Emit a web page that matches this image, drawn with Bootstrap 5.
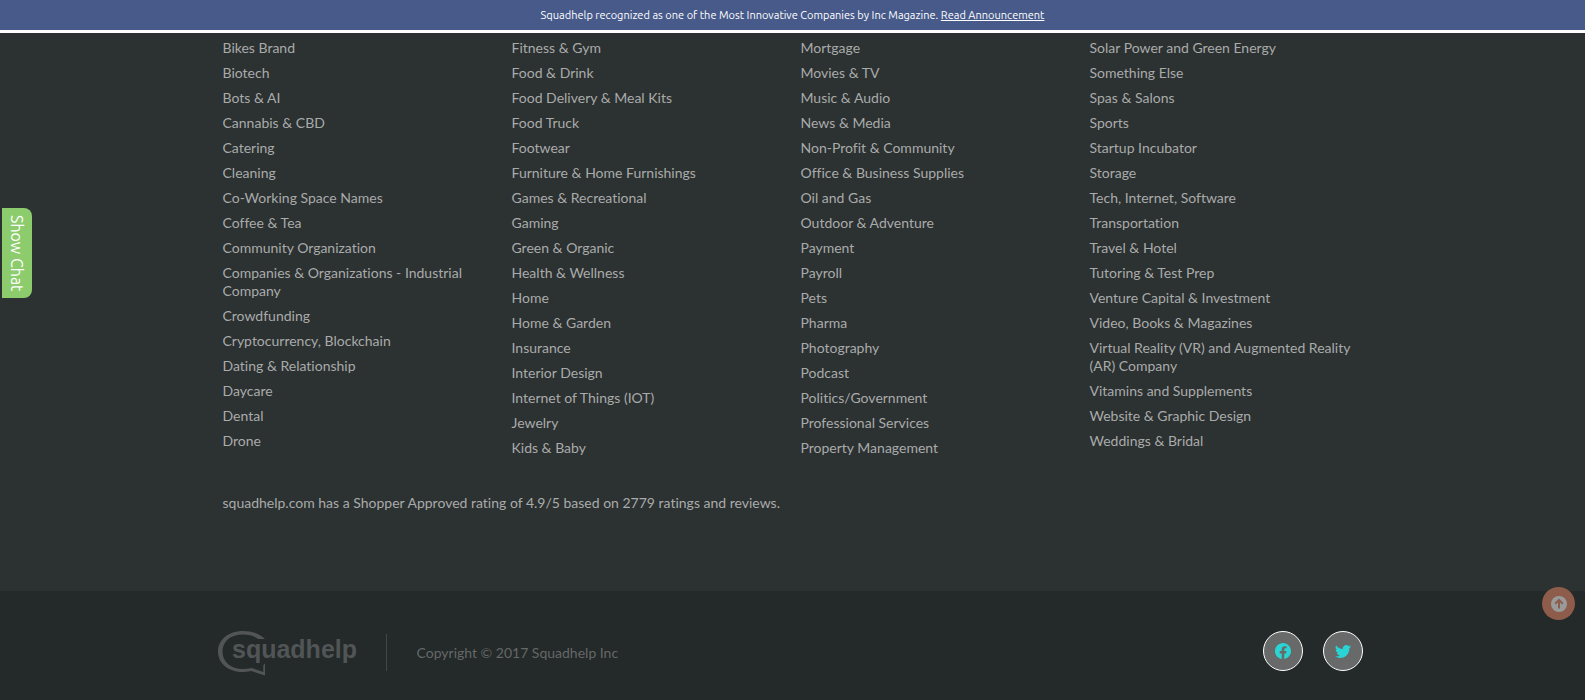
<!DOCTYPE html>
<html lang="en">
<head>
<meta charset="utf-8">
<meta name="viewport" content="width=device-width, initial-scale=1">
<title>Squadhelp</title>
<link href="https://cdn.jsdelivr.net/npm/bootstrap@5.3.0/dist/css/bootstrap.min.css" rel="stylesheet">
<style>
  body { background: #2c3131; color: #a9abab; font: 14px/18px Lato, sans-serif; font-variant-ligatures: none; }
  .announce { background: #475a8a; border-bottom: 3px solid #fff; color: #fff; font: 11px/16px Ubuntu, "Noto Sans", sans-serif; padding: 7px 0; min-height: 33px; }
  .wrap { max-width: 1170px; padding: 0 15px; }
  .industries { display: grid; grid-template-columns: repeat(4, 1fr); column-gap: 16px; padding-top: 6px; }
  .industries li { margin-bottom: 7px; }
  .industries a { color: inherit; text-decoration: none; }
  .rating { padding: 30px 0 79px; }
  .site-footer { background: #242929; color: #646868; padding: 40px 0 24px; }
  .legal { border-left: 1px solid #434747; margin: 3px 0 0 29px; padding: 9px 0 9px 30px; line-height: 19px; }
  .brand-logo { display: block; margin-left: -5px; }
  .social { width: 40px; height: 40px; background: #686969; border: 1px solid #fff; color: #2bd4d4; }
  .to-top { right: 10px; bottom: 80px; width: 33px; height: 33px; background: #8e5c4a; color: #999b9a; }
  .chat-tab { left: 2px; top: 208px; width: 30px; height: 90px; background: #8ccc6d; color: #fff; border-radius: 0 8px 8px 0; writing-mode: vertical-rl; font: 16px/30px Ubuntu, "Noto Sans", sans-serif; }
  @media (max-width: 900px) { .industries { grid-template-columns: repeat(2, 1fr); } }
</style>
</head>
<body class="d-flex flex-column min-vh-100">
<header class="announce text-center sticky-top">Squadhelp recognized as one of the Most Innovative Companies by Inc Magazine. <a href="#" class="text-white">Read Announcement</a></header>
<main class="flex-grow-1">
  <div class="wrap mx-auto">
    <nav class="industries" aria-label="Industries">
      <ul class="list-unstyled mb-0">
        <li><a href="#">Bikes Brand</a></li><li><a href="#">Biotech</a></li><li><a href="#">Bots &amp; AI</a></li>
        <li><a href="#">Cannabis &amp; CBD</a></li><li><a href="#">Catering</a></li><li><a href="#">Cleaning</a></li>
        <li><a href="#">Co-Working Space Names</a></li><li><a href="#">Coffee &amp; Tea</a></li><li><a href="#">Community Organization</a></li>
        <li><a href="#">Companies &amp; Organizations - Industrial Company</a></li><li><a href="#">Crowdfunding</a></li>
        <li><a href="#">Cryptocurrency, Blockchain</a></li><li><a href="#">Dating &amp; Relationship</a></li><li><a href="#">Daycare</a></li>
        <li><a href="#">Dental</a></li><li><a href="#">Drone</a></li>
      </ul>
      <ul class="list-unstyled mb-0">
        <li><a href="#">Fitness &amp; Gym</a></li><li><a href="#">Food &amp; Drink</a></li><li><a href="#">Food Delivery &amp; Meal Kits</a></li>
        <li><a href="#">Food Truck</a></li><li><a href="#">Footwear</a></li><li><a href="#">Furniture &amp; Home Furnishings</a></li>
        <li><a href="#">Games &amp; Recreational</a></li><li><a href="#">Gaming</a></li><li><a href="#">Green &amp; Organic</a></li>
        <li><a href="#">Health &amp; Wellness</a></li><li><a href="#">Home</a></li><li><a href="#">Home &amp; Garden</a></li>
        <li><a href="#">Insurance</a></li><li><a href="#">Interior Design</a></li><li><a href="#">Internet of Things (IOT)</a></li>
        <li><a href="#">Jewelry</a></li><li><a href="#">Kids &amp; Baby</a></li>
      </ul>
      <ul class="list-unstyled mb-0">
        <li><a href="#">Mortgage</a></li><li><a href="#">Movies &amp; TV</a></li><li><a href="#">Music &amp; Audio</a></li>
        <li><a href="#">News &amp; Media</a></li><li><a href="#">Non-Profit &amp; Community</a></li><li><a href="#">Office &amp; Business Supplies</a></li>
        <li><a href="#">Oil and Gas</a></li><li><a href="#">Outdoor &amp; Adventure</a></li><li><a href="#">Payment</a></li>
        <li><a href="#">Payroll</a></li><li><a href="#">Pets</a></li><li><a href="#">Pharma</a></li>
        <li><a href="#">Photography</a></li><li><a href="#">Podcast</a></li><li><a href="#">Politics/Government</a></li>
        <li><a href="#">Professional Services</a></li><li><a href="#">Property Management</a></li>
      </ul>
      <ul class="list-unstyled mb-0">
        <li><a href="#">Solar Power and Green Energy</a></li><li><a href="#">Something Else</a></li><li><a href="#">Spas &amp; Salons</a></li>
        <li><a href="#">Sports</a></li><li><a href="#">Startup Incubator</a></li><li><a href="#">Storage</a></li>
        <li><a href="#">Tech, Internet, Software</a></li><li><a href="#">Transportation</a></li><li><a href="#">Travel &amp; Hotel</a></li>
        <li><a href="#">Tutoring &amp; Test Prep</a></li><li><a href="#">Venture Capital &amp; Investment</a></li><li><a href="#">Video, Books &amp; Magazines</a></li>
        <li><a href="#">Virtual Reality (VR) and Augmented Reality (AR) Company</a></li><li><a href="#">Vitamins and Supplements</a></li>
        <li><a href="#">Website &amp; Graphic Design</a></li><li><a href="#">Weddings &amp; Bridal</a></li>
      </ul>
    </nav>
    <p class="rating mb-0">squadhelp.com has a Shopper Approved rating of 4.9/5 based on 2779 ratings and reviews.</p>
  </div>
</main>
<footer class="site-footer">
  <div class="wrap mx-auto d-flex align-items-start">
    <a href="#" aria-label="Squadhelp home">
      <svg class="brand-logo" width="139" height="45" viewBox="0 0 139 45">
        <path d="M47 8C42 3 34 0 25 0C10 0 0 9 0 20.500C0 33 11 41 25 41Q29 41 33 40L47 44.500V32.500Q45 33 45.300 38V41L34 37Q29 38 25 38C13 38 4.500 31 4.500 20.500C4.500 10 13 3.500 25 3.500C32 3.500 37 5.500 40 8Z" fill="#515556"/>
        <text x="14" y="27" font-family="Liberation Sans, Arial, sans-serif" font-weight="700" font-size="25" fill="#515556">squadhelp</text>
      </svg>
    </a>
    <div class="legal">Copyright © 2017 Squadhelp Inc</div>
    <div class="ms-auto d-flex gap-3">
      <a href="#" aria-label="Facebook" class="social rounded-circle d-flex align-items-center justify-content-center me-1">
        <svg width="16" height="16" viewBox="0 0 16 16" fill="currentColor"><path d="M16 8.049c0-4.446-3.582-8.050-8-8.050C3.580 0-.002 3.603-.002 8.050c0 4.017 2.926 7.347 6.750 7.951v-5.625h-2.030V8.050H6.750V6.275c0-2.017 1.195-3.131 3.022-3.131.876 0 1.791.157 1.791.157v1.980h-1.009c-.993 0-1.303.621-1.303 1.258v1.510h2.218l-.354 2.326H9.250V16c3.824-.604 6.750-3.934 6.750-7.951z"/></svg>
      </a>
      <a href="#" aria-label="Twitter" class="social rounded-circle d-flex align-items-center justify-content-center">
        <svg width="16" height="16" viewBox="0 0 16 16" fill="currentColor"><path d="M5.026 15c6.038 0 9.341-5.003 9.341-9.334 0-.140 0-.282-.006-.422A6.685 6.685 0 0 0 16 3.542a6.658 6.658 0 0 1-1.889.518 3.301 3.301 0 0 0 1.447-1.817 6.533 6.533 0 0 1-2.087.793A3.286 3.286 0 0 0 7.875 6.030a9.325 9.325 0 0 1-6.767-3.429 3.289 3.289 0 0 0 1.018 4.382A3.323 3.323 0 0 1 .640 6.575v.045a3.288 3.288 0 0 0 2.632 3.218 3.203 3.203 0 0 1-.865.115 3.230 3.230 0 0 1-.614-.057 3.283 3.283 0 0 0 3.067 2.277A6.588 6.588 0 0 1 .780 13.580a6.320 6.320 0 0 1-.780-.045A9.344 9.344 0 0 0 5.026 15z"/></svg>
      </a>
    </div>
  </div>
</footer>
<button type="button" class="chat-tab position-fixed border-0 p-0">Show Chat</button>
<button type="button" aria-label="Back to top" class="to-top position-fixed border-0 p-0 rounded-circle d-flex align-items-center justify-content-center">
  <svg width="16" height="16" viewBox="0 0 16 16"><circle cx="8" cy="8" r="8" fill="currentColor"/><path d="M8 12.500V4M4.200 7.800L8 4L11.800 7.800" fill="none" stroke="#8e5c4a" stroke-width="2"/></svg>
</button>
<script src="https://cdn.jsdelivr.net/npm/bootstrap@5.3.0/dist/js/bootstrap.bundle.min.js"></script>
</body>
</html>
